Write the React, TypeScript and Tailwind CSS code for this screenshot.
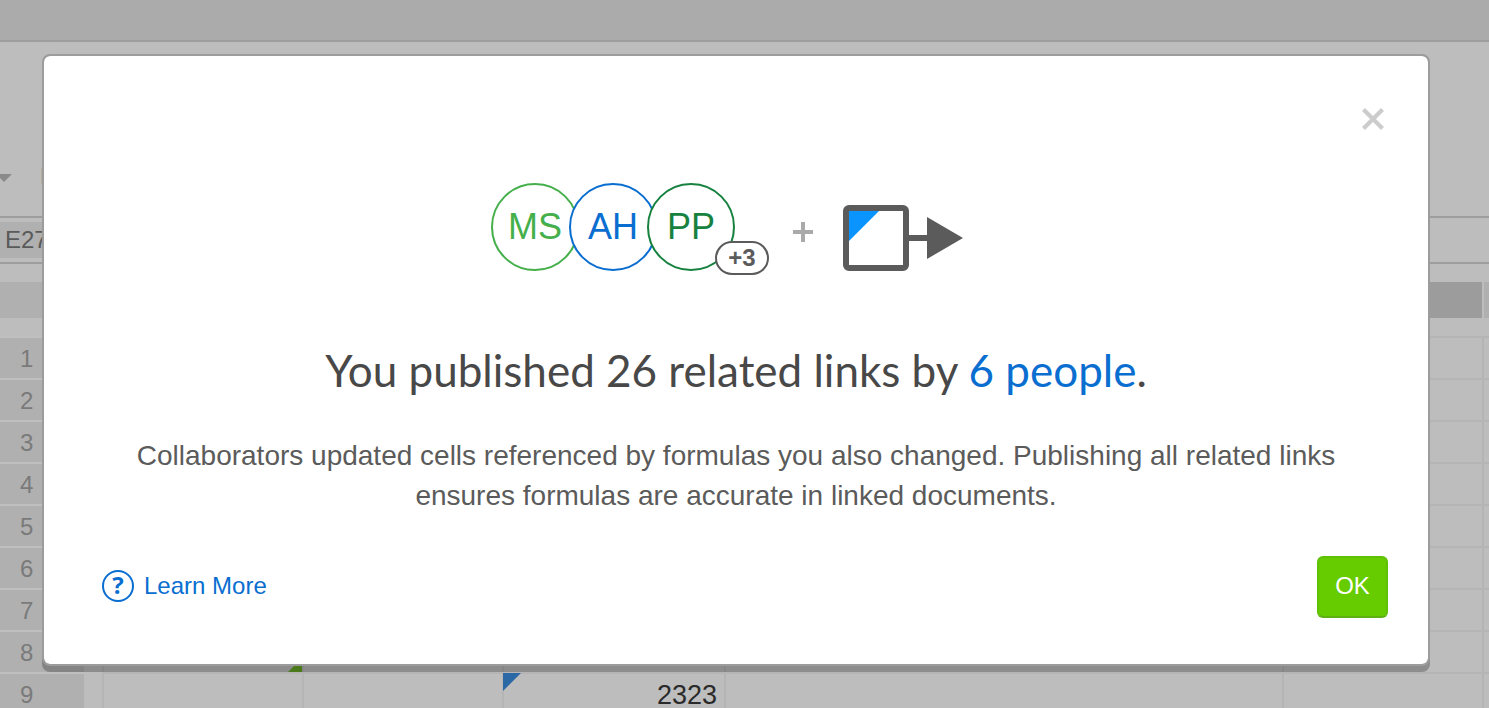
import { useState } from "react";
import clsx from "clsx";

interface Cell {
  value?: string;
  marker?: "source" | "destination";
}

interface Collaborator {
  initials: string;
  className: string;
}

const COLUMNS = ["A", "B", "C", "D", "E", "F"];
const ROWS = [1, 2, 3, 4, 5, 6, 7, 8, 9];
const SELECTED_COLUMN = "E";

const CELLS: Record<string, Cell> = {
  A8: { marker: "source" },
  C9: { value: "2323", marker: "destination" },
};

const COLLABORATORS: Collaborator[] = [
  { initials: "MS", className: "border-[#45b04b] text-[#45b04b]" },
  { initials: "AH", className: "border-[#0a6ed1] text-[#0a6ed1]" },
  { initials: "PP", className: "border-[#17823f] text-[#17823f]" },
];

function CellMarker({ type }: { type: "source" | "destination" }) {
  if (type === "source") {
    return (
      <svg className="absolute right-0 bottom-0 size-[14px]" viewBox="0 0 14 14" aria-hidden="true">
        <path d="M14 0V14H0Z" fill="#63a325" />
      </svg>
    );
  }
  return (
    <svg className="absolute -top-px -left-px size-[18px]" viewBox="0 0 18 18" aria-hidden="true">
      <path d="M0 0H18L0 18Z" fill="#2b69a6" />
    </svg>
  );
}

function Spreadsheet() {
  return (
    <table className="mt-[18px] w-full table-fixed border-separate border-spacing-0">
      <colgroup>
        <col className="w-[84px]" />
        <col className="w-[18px]" />
        <col className="w-[200px]" />
        <col className="w-[200px]" />
        <col className="w-[222px]" />
        <col className="w-[558px]" />
        <col className="w-[200px]" />
        <col />
      </colgroup>
      <thead>
        <tr className="h-9">
          <td className="bg-[#b0b0b0]" />
          <td />
          {COLUMNS.map((column) => (
            <td
              key={column}
              className={clsx(
                "border-l-2 border-[#bdbdbd]",
                column === SELECTED_COLUMN ? "bg-[#9c9c9c]" : "bg-[#b0b0b0]"
              )}
            />
          ))}
        </tr>
        <tr className="h-[18px]">
          <td colSpan={8} />
        </tr>
      </thead>
      <tbody>
        {ROWS.map((row) => (
          <tr key={row} className="h-[42px]">
            <th
              scope="row"
              className="border-t-2 border-[#bfbfbf] bg-[#b0b0b0] p-0 pt-0.5 pl-5 text-left text-2xl font-normal text-[#7a7a7a]"
            >
              {row}
            </th>
            <td />
            {COLUMNS.map((column) => {
              const cell = CELLS[`${column}${row}`];
              return (
                <td
                  key={column}
                  className="relative border-t-2 border-l-2 border-[#b5b5b5] p-0 pt-0.5 pr-[7px] text-right text-[27px] leading-9 text-[#2a2a2a]"
                >
                  {cell?.marker && <CellMarker type={cell.marker} />}
                  {cell?.value}
                </td>
              );
            })}
          </tr>
        ))}
      </tbody>
    </table>
  );
}

function Workspace() {
  return (
    <div>
      {/* Title bar */}
      <div className="h-[42px] border-b-2 border-[#9e9e9e] bg-[#ababab]" />

      {/* Toolbar */}
      <div className="flex h-44 items-end border-b-2 border-[#9e9e9e] pb-8">
        <button type="button" aria-label="More options" className="-ml-1 flex h-4 w-[45px] items-center pt-1">
          <svg className="h-2 w-4" viewBox="0 0 16 8" aria-hidden="true">
            <path d="M0 0H16L8 8Z" fill="#8a8a8a" />
          </svg>
        </button>
        <div className="h-4 w-5 bg-[#b5ae9f]" />
      </div>

      {/* Formula bar */}
      <div className="flex h-[46px] items-center border-b-2 border-[#9e9e9e]">
        <input
          aria-label="Selected cell"
          defaultValue="E27"
          className="h-9 w-32 bg-[#b0b0b0] pl-[5px] text-2xl text-[#5a5a5a] outline-none"
        />
      </div>

      <Spreadsheet />
    </div>
  );
}

function PublishedDialog({ onClose }: { onClose: () => void }) {
  return (
    <div className="absolute inset-0 flex items-start pt-[54px] pr-[59px] pl-[42px]">
      <div
        role="dialog"
        aria-labelledby="dialog-title"
        className="flex-1 rounded-lg border-2 border-[#9c9c9c] bg-white bg-clip-padding pb-[46px] text-center text-[#5b5b5b] shadow-[0_6px_0_rgba(0,0,0,0.25)]"
      >
        <div className="flex justify-end pt-[52px] pr-11">
          <button type="button" aria-label="Close" onClick={onClose}>
            <svg className="size-[22px]" viewBox="0 0 22 22" aria-hidden="true">
              <path d="M1.5 1.5L20.5 20.5M20.5 1.5L1.5 20.5" stroke="#cccccc" strokeWidth="4.2" />
            </svg>
          </button>
        </div>

        {/* Collaborators + linked cell */}
        <div className="mt-[53px] flex items-center justify-center pr-[18px]">
          <div className="relative flex">
            {COLLABORATORS.map(({ initials, className }, index) => (
              <div
                key={initials}
                className={clsx(
                  "flex size-[88px] items-center justify-center rounded-full border-2 bg-white text-4xl",
                  index > 0 && "-ml-[10px]",
                  className
                )}
              >
                {initials}
              </div>
            ))}
            <span className="absolute -right-[34px] -bottom-1 flex h-[34px] w-[54px] items-center justify-center rounded-full border-2 border-[#5b5b5b] bg-white text-2xl font-bold">
              +3
            </span>
          </div>
          <svg className="mt-[10px] ml-[58px] size-5" viewBox="0 0 20 20" aria-hidden="true">
            <path d="M10 0V20M0 10H20" stroke="#aaaaaa" strokeWidth="4" />
          </svg>
          <svg className="mt-[22px] ml-[30px] h-[66px] w-[120px]" viewBox="0 0 120 66" aria-hidden="true">
            <rect x="3" y="3" width="60" height="60" rx="3" fill="#fff" stroke="#5b5b5b" strokeWidth="6" />
            <path d="M6 6H36L6 36Z" fill="#0a94ff" />
            <path d="M64 30H84V12L120 33L84 54V36H64Z" fill="#5b5b5b" />
          </svg>
        </div>

        <h1 id="dialog-title" className="mt-[71px] font-[Lato,sans-serif] text-[44px] leading-[56px] text-[#484848]">
          You published 26 related links by{" "}
          <a href="#people" className="text-[#0a6ed1]">
            6 people
          </a>
          .
        </h1>

        <p className="mx-auto mt-[38px] max-w-[1240px] text-[28px] leading-10">
          Collaborators updated cells referenced by formulas you also changed. Publishing all related links ensures
          formulas are accurate in linked documents.
        </p>

        <div className="mt-10 flex items-center justify-between pr-10 pl-[58px]">
          <a href="#learn-more" className="flex items-center gap-[10px] pb-[3px] text-2xl text-[#0a6ed1]">
            <span className="flex size-8 items-center justify-center rounded-full border-2 border-current pb-0.5 font-['Open_Sans',sans-serif] font-bold">
              ?
            </span>
            Learn More
          </a>
          <button
            type="button"
            onClick={onClose}
            className="h-[62px] w-[71px] rounded-md border-2 border-[#5fc005] border-b-[#5eb013] bg-[#66cc00] pb-0.5 text-2xl text-white"
          >
            OK
          </button>
        </div>
      </div>
    </div>
  );
}

export default function App() {
  const [open, setOpen] = useState(true);

  return (
    <div className="relative h-screen overflow-hidden bg-[#bdbdbd] font-['Liberation_Sans',Arial,sans-serif]">
      <Workspace />
      {open && <PublishedDialog onClose={() => setOpen(false)} />}
    </div>
  );
}
